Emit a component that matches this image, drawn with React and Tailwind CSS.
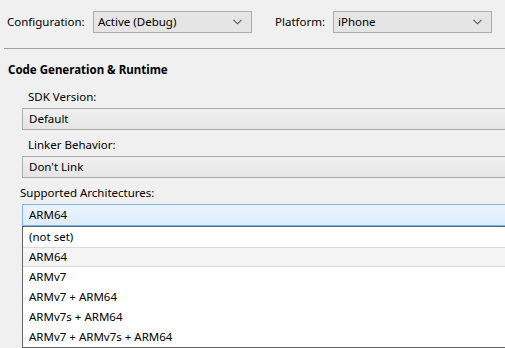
const archOptions = [
  '(not set)',
  'ARM64',
  'ARMv7',
  'ARMv7 + ARM64',
  'ARMv7s + ARM64',
  'ARMv7 + ARMv7s + ARM64',
];

const Chevron = () => (
  <svg width="9" height="6" viewBox="0 0 9 6" className="shrink-0">
    <path d="M0.5 0.8 L4.5 4.8 L8.5 0.8" fill="none" stroke="#555" strokeWidth="1.1" />
  </svg>
);

const Combo = ({ value }) => (
  <div className="flex items-center justify-between w-[159px] h-[22px] border border-[#acacac] bg-[#e5e5e5] pl-[4px] pr-[9px]">
    <span>{value}</span>
    <Chevron />
  </div>
);

const Field = ({ value }) => (
  <div className="ml-[22px] w-[500px] h-[22px] flex items-center pl-[6px] border border-[#acacac] bg-gradient-to-b from-[#f0f0f0] to-[#e5e5e5]">
    {value}
  </div>
);

export default function App() {
  return (
    <div
      className="w-[505px] h-[348px] overflow-hidden bg-[#f0f0f0] text-black text-[11.5px] leading-none"
      style={{ fontFamily: '"Noto Sans", "Open Sans", sans-serif' }}
    >
      <div className="flex items-center h-[42px] pt-[1px]">
        <span className="ml-[7px] w-[86px]">Configuration:</span>
        <Combo value="Active (Debug)" />
        <span className="ml-[23px] w-[58px]">Platform:</span>
        <Combo value="iPhone" />
      </div>

      <div className="ml-[4px] mt-[6px] h-px bg-[#a0a0a0]" />

      <div className="ml-[8px] mt-[15px] font-bold">Code Generation &amp; Runtime</div>

      <div className="ml-[28px] mt-[15px]">SDK Version:</div>
      <div className="mt-[6px]">
        <Field value="Default" />
      </div>

      <div className="ml-[28px] mt-[9px]">Linker Behavior:</div>
      <div className="mt-[5px]">
        <Field value="Don't Link" />
      </div>

      <div className="ml-[20px] mt-[9px]">Supported Architectures:</div>
      <div className="mt-[6px] ml-[22px] w-[500px] h-[22px] flex items-center pl-[6px] border border-[#7eb4ea] bg-gradient-to-b from-[#ecf4fc] to-[#dcecfc]">
        ARM64
      </div>
      <div className="ml-[22px] w-[500px] border border-[#646464] bg-white">
        {archOptions.map((opt) => (
          <div
            key={opt}
            className={
              opt === 'ARM64'
                ? 'h-[20px] flex items-center pl-[6px] bg-[#f5f5f5] border-y border-[#dadada]'
                : 'h-[20px] flex items-center pl-[6px]'
            }
          >
            {opt}
          </div>
        ))}
      </div>
    </div>
  );
}
